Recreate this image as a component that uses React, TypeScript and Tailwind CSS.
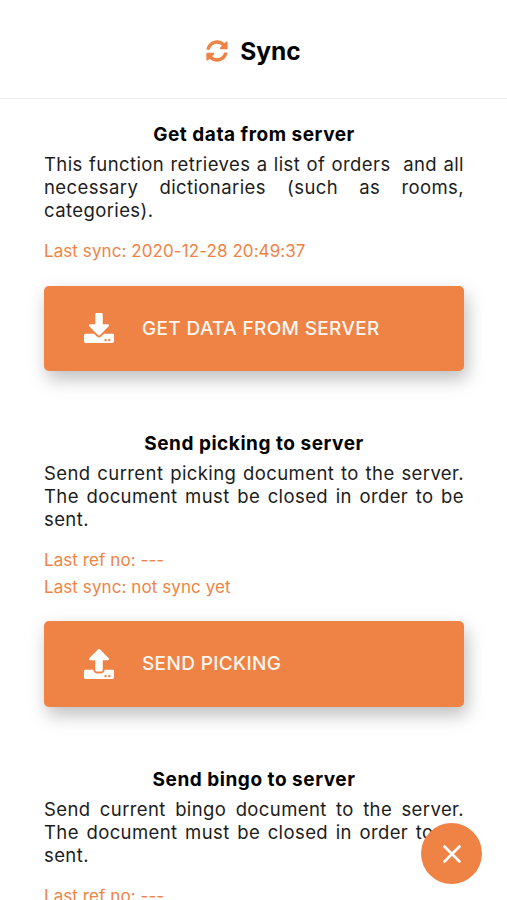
import type { ReactNode } from 'react';
import { FaDownload, FaSyncAlt, FaUpload } from 'react-icons/fa';

type SectionProps = {
  title: string;
  description: string;
  status: string[];
  icon: ReactNode;
  action: string;
};

const SyncSection = ({ title, description, status, icon, action }: SectionProps) => (
  <section className="mb-[58.9px]">
    <h2 className="text-center text-[19px] leading-[27px] font-bold tracking-[0.53px] text-black">{title}</h2>
    <p className="mt-[5px] text-justify whitespace-pre-wrap text-[18.5px] leading-[23.2px] tracking-[0.4px] text-[#1c1c1c]">
      {description}
    </p>
    <div className="mt-[15.2px] text-[17px] leading-[26.8px] tracking-[0.08px] text-[#ef8346]">
      {status.map((line) => (
        <p key={line}>{line}</p>
      ))}
    </div>
    <button className="mt-[21px] flex h-[85.5px] w-full items-center rounded-[5px] bg-[#ef8346] pl-10 text-white shadow-[3px_8px_18px_rgba(0,0,0,0.26)]">
      {icon}
      <span className="ml-7 pt-px text-[19px] font-medium tracking-[0.35px] text-[#fff7f0]">{action}</span>
    </button>
  </section>
);

const App = () => {
  return (
    <div className="h-[900px] overflow-hidden bg-white font-['Inter',sans-serif]">
      <header className="flex h-[99px] items-center justify-center gap-3 border-b border-[#eeeeee] pt-[3px]">
        <FaSyncAlt size={22} className="text-[#ef8346]" />
        <h1 className="text-[24.5px] leading-8 font-bold text-black">Sync</h1>
      </header>

      <main className="pt-[22px] pr-[43px] pl-11">
        <SyncSection
          title="Get data from server"
          description="This function retrieves a list of orders  and all necessary dictionaries (such as rooms, categories)."
          status={['Last sync: 2020-12-28 20:49:37']}
          icon={<FaDownload size={30} />}
          action="GET DATA FROM SERVER"
        />
        <SyncSection
          title="Send picking to server"
          description="Send current picking document to the server. The document must be closed in order to be sent."
          status={['Last ref no: ---', 'Last sync: not sync yet']}
          icon={<FaUpload size={30} />}
          action="SEND PICKING"
        />
        <SyncSection
          title="Send bingo to server"
          description="Send current bingo document to the server. The document must be closed in order to be sent."
          status={['Last ref no: ---', 'Last sync: not sync yet']}
          icon={<FaUpload size={30} />}
          action="SEND BINGO"
        />
      </main>

      <button
        className="fixed top-[823px] left-[421px] flex size-[61px] items-center justify-center rounded-full bg-[#ef8346] text-white"
        aria-label="Close"
      >
        <svg width="18" height="18" viewBox="0 0 18 18" fill="none" stroke="currentColor" strokeWidth="2.6" strokeLinecap="round">
          <path d="M1.5 1.5l15 15M16.5 1.5l-15 15" />
        </svg>
      </button>
    </div>
  );
};

export default App;
